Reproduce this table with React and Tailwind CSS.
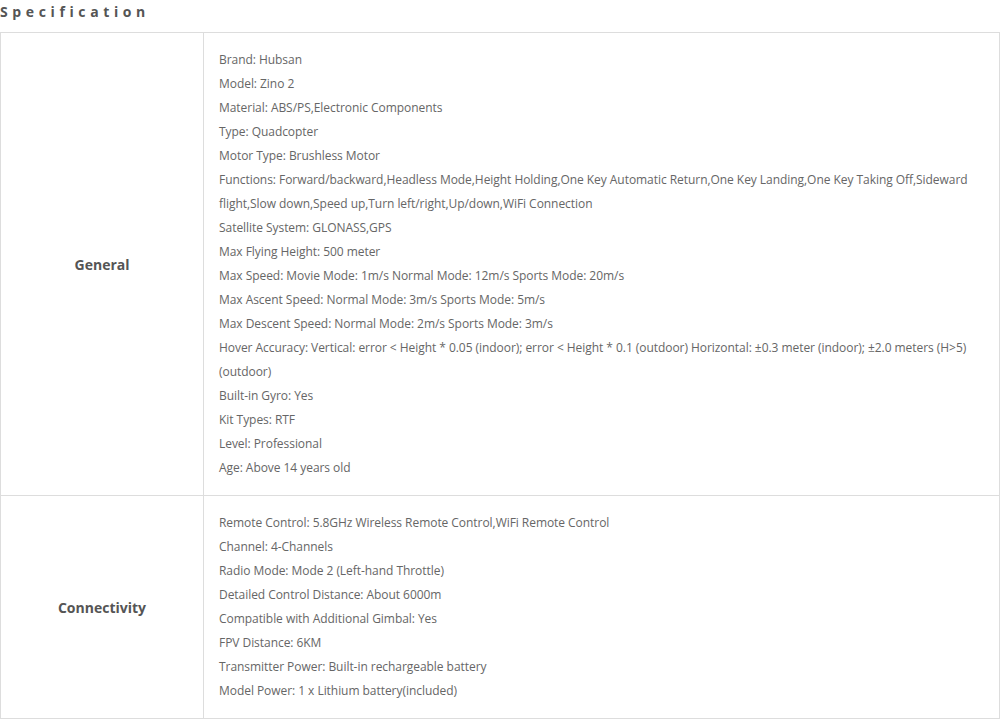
const general = [
  "Brand: Hubsan",
  "Model: Zino 2",
  "Material: ABS/PS,Electronic Components",
  "Type: Quadcopter",
  "Motor Type: Brushless Motor",
  "Functions: Forward/backward,Headless Mode,Height Holding,One Key Automatic Return,One Key Landing,One Key Taking Off,Sideward flight,Slow down,Speed up,Turn left/right,Up/down,WiFi Connection",
  "Satellite System: GLONASS,GPS",
  "Max Flying Height: 500 meter",
  "Max Speed: Movie Mode: 1m/s Normal Mode: 12m/s Sports Mode: 20m/s",
  "Max Ascent Speed: Normal Mode: 3m/s Sports Mode: 5m/s",
  "Max Descent Speed: Normal Mode: 2m/s Sports Mode: 3m/s",
  "Hover Accuracy: Vertical: error < Height * 0.05 (indoor); error < Height * 0.1 (outdoor) Horizontal: ±0.3 meter (indoor); ±2.0 meters (H>5) (outdoor)",
  "Built-in Gyro: Yes",
  "Kit Types: RTF",
  "Level: Professional",
  "Age: Above 14 years old",
];

const connectivity = [
  "Remote Control: 5.8GHz Wireless Remote Control,WiFi Remote Control",
  "Channel: 4-Channels",
  "Radio Mode: Mode 2 (Left-hand Throttle)",
  "Detailed Control Distance: About 6000m",
  "Compatible with Additional Gimbal: Yes",
  "FPV Distance: 6KM",
  "Transmitter Power: Built-in rechargeable battery",
  "Model Power: 1 x Lithium battery(included)",
];

const sections = [
  { name: "General", items: general },
  { name: "Connectivity", items: connectivity },
];

export default function App() {
  return (
    <div className="min-h-screen bg-white font-['Open_Sans',sans-serif] text-[#666]">
      <h2 className="h-[32px] pt-[2px] text-[14px] font-bold leading-[20px] tracking-[0.33em] text-[#555]">
        Specification
      </h2>
      <table className="w-full border-collapse border border-[#ddd]">
        <tbody>
          {sections.map((s) => (
            <tr key={s.name} className="border border-[#ddd]">
              <td className="w-[203px] border border-[#ddd] text-center align-middle text-[14px] font-bold text-[#555]">
                {s.name}
              </td>
              <td className="border border-[#ddd] px-[15px] py-[15px] text-[12px] leading-[24px] tracking-[-0.05px]">
                {s.items.map((t) => (
                  <div key={t}>{t}</div>
                ))}
              </td>
            </tr>
          ))}
        </tbody>
      </table>
    </div>
  );
}
